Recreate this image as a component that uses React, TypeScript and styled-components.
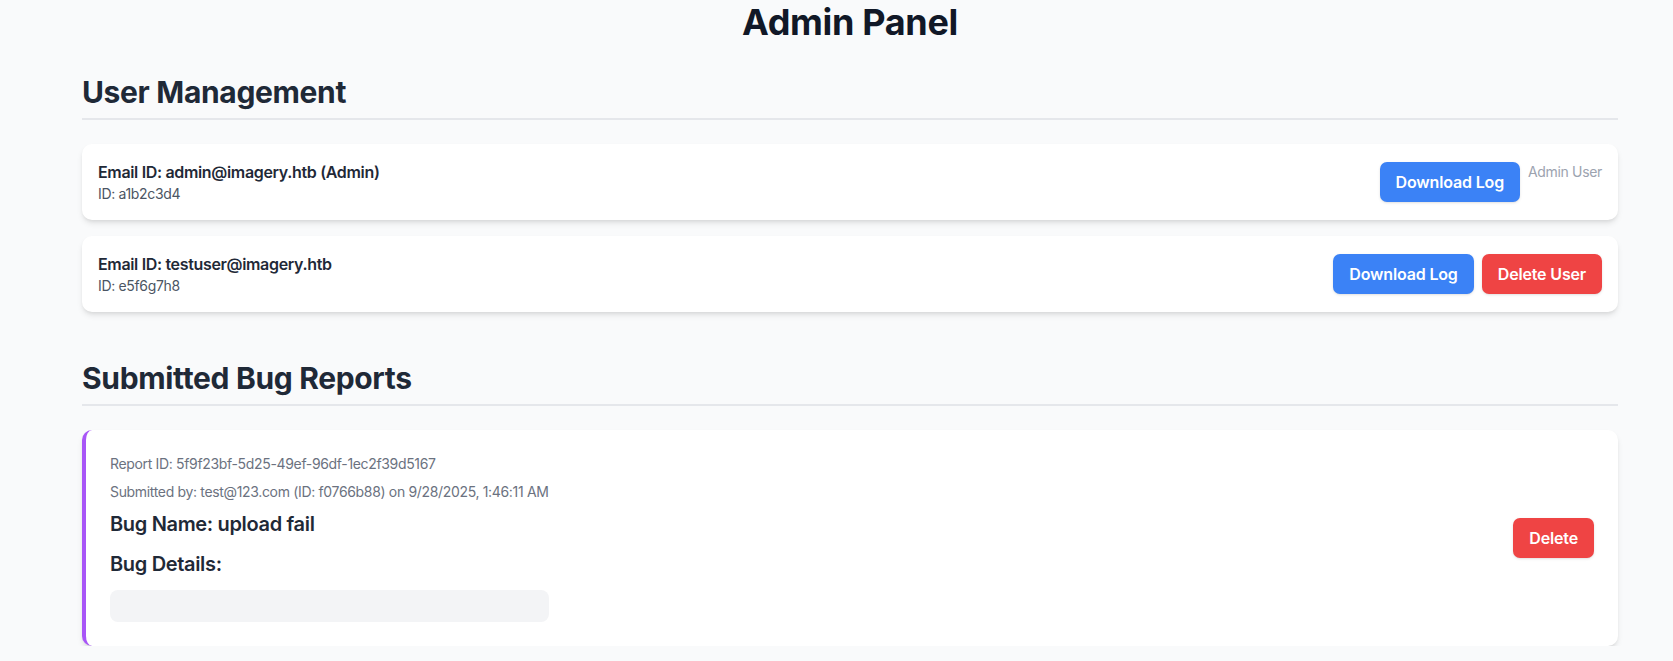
import { createGlobalStyle, styled } from 'styled-components'

const GlobalStyle = createGlobalStyle`
  * { box-sizing: border-box; }
  body {
    margin: 0;
    background: #f9fafb;
    font-family: Inter, 'Noto Sans', sans-serif;
    letter-spacing: -0.021em;
    color: #1f2937;
  }
`

const users = [
  { email: 'admin@imagery.htb', id: 'a1b2c3d4', admin: true },
  { email: 'testuser@imagery.htb', id: 'e5f6g7h8', admin: false }
]

const reports = [
  {
    id: '5f9f23bf-5d25-49ef-96df-1ec2f39d5167',
    by: 'test@123.com',
    byId: 'f0766b88',
    date: '9/28/2025, 1:46:11 AM',
    name: 'upload fail',
    details: ''
  }
]

export default function App() {
  return (
    <>
      <GlobalStyle />
      <Page>
        <Title>Admin Panel</Title>

        <Section>
          <SectionTitle>User Management</SectionTitle>
          <List>
            {users.map(user => (
              <UserCard key={user.id}>
                <div>
                  <Email>
                    Email ID: {user.email}{user.admin ? ' (Admin)' : ''}
                  </Email>
                  <SmallId>ID: {user.id}</SmallId>
                </div>
                <Actions>
                  <Button $color="blue">Download Log</Button>
                  {user.admin ? (
                    <Muted>Admin User</Muted>
                  ) : (
                    <Button $color="red">Delete User</Button>
                  )}
                </Actions>
              </UserCard>
            ))}
          </List>
        </Section>

        <Section>
          <SectionTitle>Submitted Bug Reports</SectionTitle>
          <List>
            {reports.map(report => (
              <ReportCard key={report.id}>
                <ReportBody>
                  <Meta>Report ID: {report.id}</Meta>
                  <Meta>
                    Submitted by: {report.by} (ID: {report.byId}) on {report.date}
                  </Meta>
                  <BugHeading>Bug Name: {report.name}</BugHeading>
                  <BugHeading>Bug Details:</BugHeading>
                  <Details>{report.details}</Details>
                </ReportBody>
                <Button $color="red">Delete</Button>
              </ReportCard>
            ))}
          </List>
        </Section>
      </Page>
    </>
  )
}

const Page = styled.div`
  padding: 2px 55px 0 82px;
`
const Title = styled.h1`
  margin: 0 0 32px;
  text-align: center;
  font-size: 36px;
  line-height: 40px;
  font-weight: 700;
  color: #111827;
`
const Section = styled.section`
  margin-bottom: 48px;

  &:last-child {
    margin-bottom: 0;
  }
`
const SectionTitle = styled.h2`
  margin: 0 0 24px;
  padding-bottom: 8px;
  border-bottom: 2px solid #e5e7eb;
  font-size: 30px;
  line-height: 36px;
  font-weight: 700;
  color: #1f2937;
`
const List = styled.div`
  display: flex;
  flex-direction: column;
  gap: 16px;
`
const UserCard = styled.div`
  display: flex;
  justify-content: space-between;
  align-items: center;
  padding: 16px;
  background: #ffffff;
  border-radius: 10px;
  box-shadow: 0 4px 6px -1px rgba(0, 0, 0, 0.1), 0 2px 4px -2px rgba(0, 0, 0, 0.1);
`
const Email = styled.p`
  margin: 0;
  font-size: 16px;
  line-height: 24px;
  font-weight: 600;
  color: #1f2937;
`
const SmallId = styled.p`
  margin: 0;
  font-size: 14px;
  line-height: 20px;
  color: #4b5563;
`
const Actions = styled.div`
  display: flex;
  align-items: flex-start;
  gap: 8px;
`
const Button = styled.button<{ $color: 'blue' | 'red' }>`
  border: none;
  border-radius: 7px;
  padding: 8px 16px;
  font-family: inherit;
  letter-spacing: -0.01em;
  font-size: 16px;
  line-height: 24px;
  font-weight: 600;
  color: #ffffff;
  background: ${p => (p.$color === 'blue' ? '#3b82f6' : '#ef4444')};
  box-shadow: 0 1px 3px 0 rgba(0, 0, 0, 0.1), 0 1px 2px -1px rgba(0, 0, 0, 0.1);
  cursor: pointer;
  flex-shrink: 0;
`
const Muted = styled.span`
  font-size: 14px;
  line-height: 20px;
  color: #9ca3af;
`
const ReportCard = styled.div`
  display: flex;
  justify-content: space-between;
  align-items: center;
  padding: 24px;
  background: #ffffff;
  border-left: 4px solid #a855f7;
  border-radius: 10px;
  box-shadow: 0 4px 6px -1px rgba(0, 0, 0, 0.1), 0 2px 4px -2px rgba(0, 0, 0, 0.1);
`
const ReportBody = styled.div`
  display: flex;
  flex-direction: column;
`
const Meta = styled.p`
  margin: 0 0 8px;
  font-size: 14px;
  line-height: 20px;
  color: #6b7280;
`
const BugHeading = styled.h3`
  margin: 0 0 12px;
  font-size: 20px;
  line-height: 28px;
  font-weight: 600;
  color: #1f2937;
`
const Details = styled.pre`
  margin: 0;
  padding: 16px;
  min-height: 32px;
  background: #f3f4f6;
  border-radius: 8px;
  font-family: inherit;
  font-size: 14px;
  white-space: pre-wrap;
`
